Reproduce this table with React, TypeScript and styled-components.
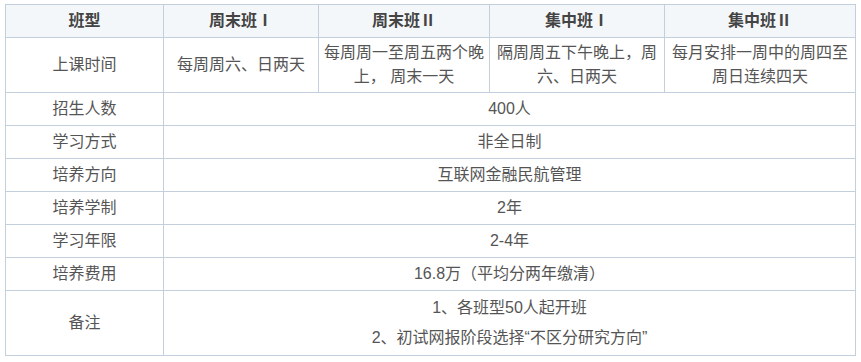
import styled, { createGlobalStyle } from 'styled-components';

const GlobalStyle = createGlobalStyle`
  body {
    margin: 0;
    background: #fff;
    font-family: "Liberation Sans", "Noto Sans CJK SC", sans-serif;
  }
`;

const Wrap = styled.div`
  padding: 4px 5px;
`;

const Table = styled.table`
  width: 850px;
  border-collapse: collapse;
  table-layout: fixed;
  color: #555;
  font-size: 16px;
`;

const HeadCell = styled.th`
  height: 26px;
  padding: 3px 4px;
  border: 1px solid #c3cfdd;
  background: #f4f7f9;
  color: #444;
  font-weight: 700;
  line-height: 26px;
  text-align: center;
`;

const Cell = styled.td<{ $tight?: boolean }>`
  height: 26px;
  padding: ${(p) => (p.$tight ? '2px 4px' : '3px 4px')};
  border: 1px solid #c3cfdd;
  line-height: 24px;
  text-align: center;
  vertical-align: middle;
  word-break: break-all;
`;

const Note = styled.div`
  line-height: 30px;
`;

const widths = [158, 155, 171, 175, 191];
const heads = ['班型', '周末班Ⅰ', '周末班Ⅱ', '集中班Ⅰ', '集中班Ⅱ'];

const singleRows = [
  { label: '招生人数', value: '400人' },
  { label: '学习方式', value: '非全日制' },
  { label: '培养方向', value: '互联网金融民航管理' },
  { label: '培养学制', value: '2年' },
  { label: '学习年限', value: '2-4年' },
  { label: '培养费用', value: '16.8万（平均分两年缴清）' },
];

const schedule = [
  '每周周六、日两天',
  '每周周一至周五两个晚上， 周末一天',
  '隔周周五下午晚上，周六、日两天',
  '每月安排一周中的周四至周日连续四天',
];

export default function App() {
  return (
    <>
      <GlobalStyle />
      <Wrap>
        <Table>
          <colgroup>
            {widths.map((w, i) => (
              <col key={i} style={{ width: w }} />
            ))}
          </colgroup>
          <thead>
            <tr>
              {heads.map((h) => (
                <HeadCell key={h}>{h}</HeadCell>
              ))}
            </tr>
          </thead>
          <tbody>
            <tr>
              <Cell>上课时间</Cell>
              {schedule.map((s) => (
                <Cell key={s}>{s}</Cell>
              ))}
            </tr>
            {singleRows.map((r) => (
              <tr key={r.label}>
                <Cell>{r.label}</Cell>
                <Cell colSpan={4}>{r.value}</Cell>
              </tr>
            ))}
            <tr>
              <Cell $tight>备注</Cell>
              <Cell $tight colSpan={4}>
                <Note>1、各班型50人起开班</Note>
                <Note>2、初试网报阶段选择“不区分研究方向”</Note>
              </Cell>
            </tr>
          </tbody>
        </Table>
      </Wrap>
    </>
  );
}
